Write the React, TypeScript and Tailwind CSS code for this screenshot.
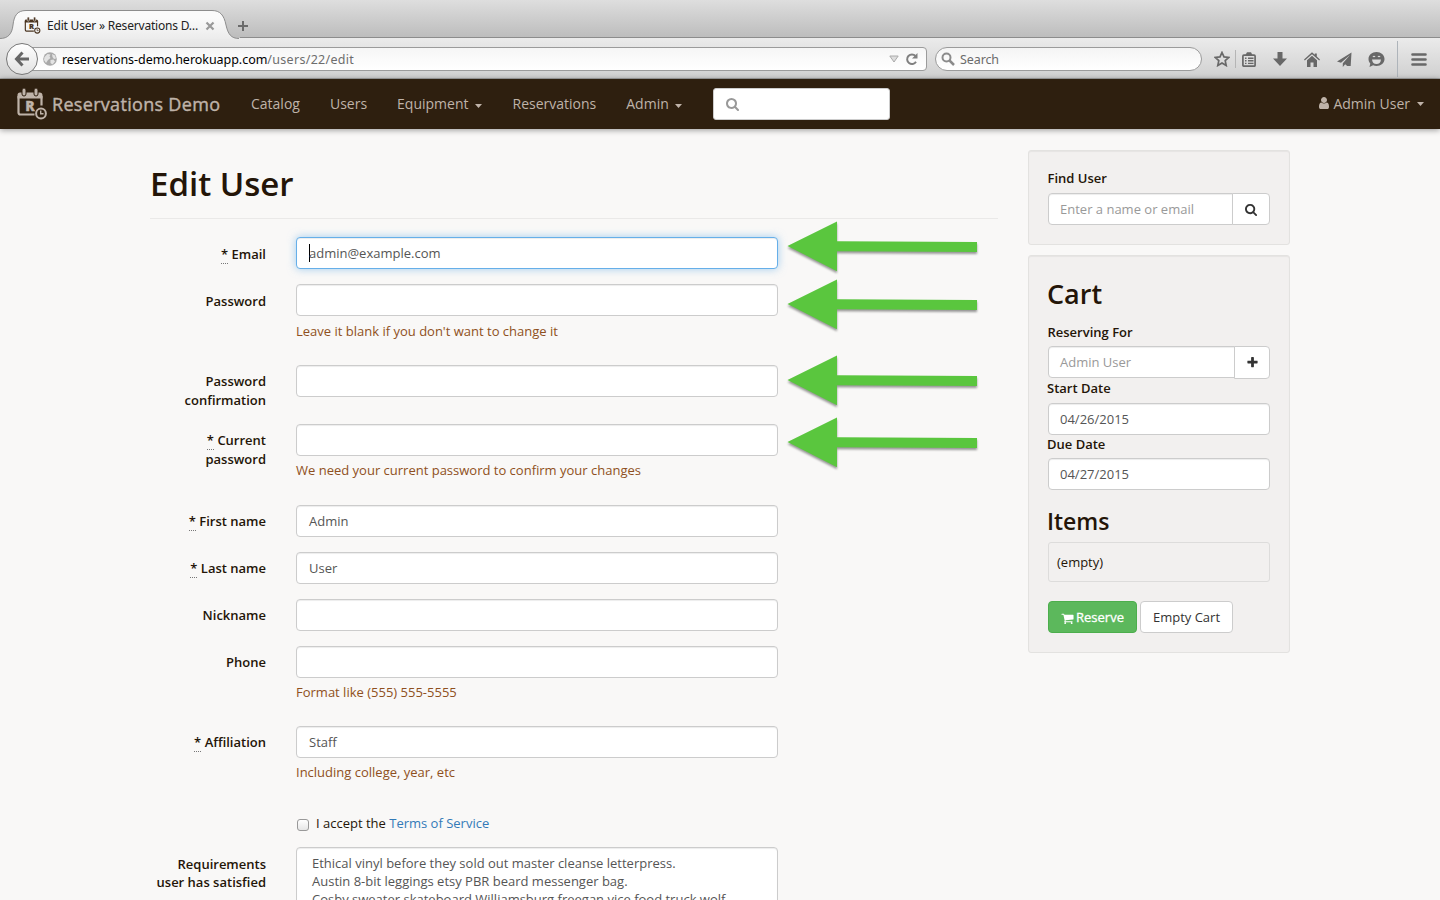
import React from "react";

const SEARCH =
  "M1152 832q0-185-131.5-316.5t-316.5-131.5-316.5 131.5-131.5 316.5 131.5 316.5 316.5 131.5 316.5-131.5 131.5-316.5zm512 832q0 52-38 90t-90 38q-54 0-90-38l-343-342q-179 124-399 124-143 0-273.5-55.5t-225-150-150-225-55.5-273.5 55.5-273.5 150-225 225-150 273.5-55.5 273.5 55.5 225 150 150 225 55.5 273.5q0 220-124 399l343 343q37 37 37 90z";
const CART =
  "M704 1536q0 52-38 90t-90 38-90-38-38-90 38-90 90-38 90 38 38 90zm896 0q0 52-38 90t-90 38-90-38-38-90 38-90 90-38 90 38 38 90zm128-1088v512q0 24-16.5 42.5t-40.5 21.5l-1044 122q13 60 13 70 0 16-24 64h920q26 0 45 19t19 45-19 45-45 19h-1024q-26 0-45-19t-19-45q0-11 8-31.5t16-36 21.5-40 15.5-29.5l-177-823h-204q-26 0-45-19t-19-45 19-45 45-19h256q16 0 28.5 6.5t19.5 15.5 13 24.5 8 26 5.5 29.5 4.5 26h1201q26 0 45 19t19 45z";
const USER =
  "M1536 1399q0 109-62.5 187t-150.5 78h-854q-88 0-150.5-78t-62.5-187q0-85 8.5-160.5t31.5-152 58.5-131 94-89 134.5-34.5q131 128 313 128t313-128q76 0 134.5 34.5t94 89 58.5 131 31.5 152 8.5 160.5zm-256-887q0 159-112.5 271.5t-271.5 112.5-271.5-112.5-112.5-271.5 112.5-271.5 271.5-112.5 271.5 112.5 112.5 271.5z";
const PLUS =
  "M1600 736v192q0 40-28 68t-68 28h-416v416q0 40-28 68t-68 28h-192q-40 0-68-28t-28-68v-416h-416q-40 0-68-28t-28-68v-192q0-40 28-68t68-28h416v-416q0-40 28-68t68-28h192q40 0 68 28t28 68v416h416q40 0 68 28t28 68z";

function Glyph({ d, className }: { d: string; className: string }) {
  return (
    <svg viewBox="0 0 1792 1792" fill="currentColor" className={className}>
      <path d={d} />
    </svg>
  );
}

function Logo({ className }: { className: string }) {
  return (
    <svg viewBox="0 0 30 32" className={className} fill="none" stroke="currentColor">
      <path d="M3 4.500h19.500q3 0 3 3V10.500H.5V7q0-2.500 2.500-2.500z" fill="currentColor" stroke="none" />
      <path d="M1.500 8v16.500q0 2 2 2h14M24.500 8v9.500" strokeWidth="2.200" />
      <rect x="5" y="0" width="4" height="8" rx="2" className="fill-current stroke-[#2e1f0f]" strokeWidth="1" />
      <rect x="17" y="0" width="4" height="8" rx="2" className="fill-current stroke-[#2e1f0f]" strokeWidth="1" />
      <text x="8.200" y="22.800" fontSize="14" fontWeight="800" fontFamily="Open Sans, sans-serif" fill="currentColor" stroke="currentColor" strokeWidth="0.300">
        R
      </text>
      <circle cx="24" cy="25.500" r="4.900" strokeWidth="2" />
      <path d="M23.700 22.500v3.200h2.800" strokeWidth="1.400" />
    </svg>
  );
}

function Caret() {
  return <span className="ml-1.5 inline-block h-0 w-[7px] align-middle"><svg viewBox="0 0 7 4" className="-mt-px h-1 w-[7px] fill-current"><path d="M0 0h7L3.500 4z" /></svg></span>;
}

function Browser() {
  return (
    <header className="h-[79px] shrink-0 font-['Noto_Sans','Open_Sans',sans-serif]">
      <div className="flex h-[38px] bg-linear-to-b from-[#dedede] to-[#bcbcbc]">
        <div className="relative h-[39px] w-[240px] shrink-0">
          <svg viewBox="0 0 240 39" className="absolute inset-0 h-[39px] w-[240px]">
            <defs>
              <linearGradient id="tab" x1="0" y1="0" x2="0" y2="1">
                <stop offset="0.250" stopColor="#fafafa" />
                <stop offset="1" stopColor="#ebebeb" />
              </linearGradient>
            </defs>
            <path d="M0 38.500C8 38.500 12 34 13 25C14 16 17 10.500 26 10.500H212C220 10.500 224 15 226 25C228 34 231 38.500 239 38.500V40H0z" fill="url(#tab)" />
            <path d="M0 38.500C8 38.500 12 34 13 25C14 16 17 10.500 26 10.500H212C220 10.500 224 15 226 25C228 34 231 38.500 239 38.500" fill="none" stroke="#8d8d8d" />
          </svg>
          <div className="relative flex h-[39px] items-center pt-3 pl-6">
            <Logo className="h-[17px] w-[17px] text-[#4a3420] [&_rect]:stroke-[#f5f5f5]" />
            <span className="ml-1.5 w-[153px] text-[12px] leading-4 tracking-[-0.200px] whitespace-nowrap text-[#222]">Edit User » Reservations D…</span>
            <svg viewBox="0 0 10 10" className="ml-[5px] size-2.5 stroke-[#999]" strokeWidth="2.200">
              <path d="M1.500 1.500l7 7M8.500 1.500l-7 7" />
            </svg>
          </div>
        </div>
        <div className="flex flex-1 items-center border-b border-[#8c8c8c] pt-3.5">
          <svg viewBox="0 0 12 12" className="-ml-[3px] size-3 stroke-[#6b6b6b]" strokeWidth="2">
            <path d="M6 1v10M1 6h10" />
          </svg>
        </div>
      </div>
      <div className="flex h-[41px] items-center border-b border-[#a5a5a5] bg-linear-to-b from-[#ebebeb] to-[#d0d0d0] pt-0.5 pl-1.5">
        <div className="relative z-10 flex size-8 shrink-0 items-center justify-center rounded-full border border-[#777] bg-linear-to-b from-white to-[#e2e2e2]">
          <svg viewBox="0 0 16 16" className="size-4 fill-none stroke-[#666]" strokeWidth="3">
            <path d="M8.500 1.500L2.500 8l6 6.500M2.500 8H15" />
          </svg>
        </div>
        <div className="-ml-2 flex h-6 w-[897px] items-center rounded-r border border-[#9b9b9b] bg-linear-to-b from-[#f6f6f6] to-white pl-3">
          <svg viewBox="0 0 14 14" className="size-3.5">
            <circle cx="7" cy="7" r="6.800" fill="#a9a9a9" />
            <path d="M1.500 5l3-3 3 .5-1 2 1 1.500-2.500 2-2 3L1 8zM9 2l3 1.500 1 3-2 .5-1.500-2zM7.500 8l3-.5 1.500 2-2.500 3-2-1.500z" fill="#e3e3e3" />
          </svg>
          <span className="ml-[5px] flex-1 pt-px text-[12.500px] leading-4 tracking-[0.300px] whitespace-nowrap text-[#6d6d6d]">
            <span className="tracking-[-0.040px] text-black">reservations-demo.herokuapp.com</span>/users/22/edit
          </span>
          <svg viewBox="0 0 10 8" className="h-2 w-2.5 fill-[#ddd] stroke-[#aaa]">
            <path d="M.8 1h8.400L5 7z" />
          </svg>
          <svg viewBox="0 0 14 14" className="mr-[7px] ml-1.5 size-3.5 fill-none stroke-[#808080]" strokeWidth="2">
            <path d="M11 9.800A4.800 4.800 0 1 1 10.500 4" />
            <path d="M12.500 1v5.500H7z" fill="#808080" stroke="none" />
          </svg>
        </div>
        <div className="ml-2 flex h-6 w-[267px] items-center rounded-full border border-[#9b9b9b] bg-linear-to-b from-[#f4f4f4] to-white pl-[5px] text-[12px] text-[#6b6b6b]">
          <svg viewBox="0 0 14 14" className="mr-[5px] size-3.5 fill-none stroke-[#8b8b8b]" strokeWidth="2">
            <circle cx="5.500" cy="5.500" r="4" />
            <path d="M8.500 8.500l4.500 4.500" strokeWidth="2.500" />
          </svg>
          <span className="pt-0.5 text-[12.500px] tracking-[-0.100px]">Search</span>
        </div>
        <div className="flex flex-1 items-center pl-3 text-[#686868]">
          <svg viewBox="0 0 16 16" className="size-4 fill-none stroke-current" strokeWidth="1.700">
            <path d="M8 1.500l2 4.400 4.800.5-3.600 3.200 1 4.900L8 12l-4.200 2.500 1-4.900L1.200 6.400 6 5.900z" />
          </svg>
          <span className="ml-[5px] h-[18px] w-px bg-[#b5b5b5]" />
          <svg viewBox="0 0 14 15" className="ml-1.5 h-[15px] w-3.5 fill-none stroke-current" strokeWidth="1.700">
            <rect x="0.900" y="3.200" width="12.200" height="11" rx="1" />
            <path d="M4.500 3l1-2h3l1 2z" fill="currentColor" />
            <path d="M3 6.200h1.500M6 6.200h5.500M3 8.800h1.500M6 8.800h5.500M3 11.400h1.500M6 11.400h5.500" strokeWidth="1.400" />
          </svg>
          <svg viewBox="0 0 14 14" className="ml-[17px] size-3.5 fill-current">
            <path d="M4.500 0h5v6.500H14L7 14 0 6.500h4.500z" />
          </svg>
          <svg viewBox="0 0 16 15" className="ml-[17px] h-[15px] w-4 fill-current">
            <path d="M8 .3l2.800 2.500V1.500h2v3.100L16 7.500l-.8 1L8 2.200.8 8.500 0 7.500z" />
            <path d="M8 3.800l5 4.400V15H9.500v-4.500h-3V15H3V8.200z" />
          </svg>
          <svg viewBox="0 0 15 15" className="ml-[17px] size-[15px] fill-current">
            <path d="M14.500.5L0 9.500l4 1.200L13 3 5.800 11.300V15l2.400-2.700 2 1.700h3.500z" />
          </svg>
          <svg viewBox="0 0 17 15" className="ml-4 h-[15px] w-[17px]">
            <path d="M8.500 0C13 0 16.500 3 16.500 7S13 14 8.500 14c-1.300 0-2.400-.2-3.400-.7L1.500 15l.8-3.500C1.100 10.300.5 8.800.5 7 .5 3 4 0 8.500 0z" fill="currentColor" />
            <path d="M4 7.500h9Q12.500 12 8.500 12T4 7.500z" fill="#ddd" />
            <path d="M5 5q1-1.500 2 0M10 5q1-1.500 2 0" fill="none" stroke="#ddd" strokeWidth="1.200" />
          </svg>
          <span className="ml-3 h-9 w-px bg-[#aeb4ba]" />
          <svg viewBox="0 0 16 13" className="ml-[13px] h-[13px] w-4 stroke-current" strokeWidth="2.600" strokeLinecap="round">
            <path d="M1.500 1.500h13M1.500 6.500h13M1.500 11.500h13" />
          </svg>
        </div>
      </div>
    </header>
  );
}

function Navbar() {
  return (
    <nav className="relative flex h-[50px] shrink-0 items-center bg-[#2e1f0f] pr-4 pl-[17px] text-[14px] text-[#bfb3a9] shadow-[0_1px_6px_rgba(0,0,0,0.4)]">
      <Logo className="h-8 w-[30px]" />
      <span className="ml-[5px] w-[199px] text-[18px] tracking-[0.310px] whitespace-nowrap [-webkit-text-stroke:0.400px_currentColor]">Reservations Demo</span>
      <div className="flex gap-[30px] pb-[2px] whitespace-nowrap">
        <span>Catalog</span>
        <span>Users</span>
        <span>Equipment<Caret /></span>
        <span className="ml-px">Reservations</span>
        <span>Admin<Caret /></span>
      </div>
      <div className="ml-[31px] flex h-8 w-[177px] items-center rounded-[3px] border border-[#ccc] bg-white pl-3 text-[#999]">
        <Glyph d={SEARCH} className="size-3.5" />
      </div>
      <div className="ml-auto flex items-center pb-[2px]">
        <Glyph d={USER} className="mr-0.5 size-3.5" />
        Admin User
        <svg viewBox="0 0 7 4" className="mt-0.5 ml-[7px] h-1 w-[7px] fill-current"><path d="M0 0h7L3.500 4z" /></svg>
      </div>
    </nav>
  );
}

const box = "rounded-[4px] border border-[#ccc] bg-white shadow-[inset_0_1px_1px_rgba(0,0,0,0.075)]";

type RowProps = {
  label: string;
  height: string;
  required?: boolean;
  value?: string;
  hint?: string;
  focused?: boolean;
  arrow?: string;
  loose?: boolean;
};

function Arrow({ offset }: { offset: string }) {
  return (
    <svg viewBox="0 0 192 54" className={`absolute left-[637px] h-[54px] w-[192px] drop-shadow-[0_2px_1px_rgba(0,0,0,0.4)] ${offset}`}>
      <path d="M.5 25L50 .5v19.800L190 21v10l-140-.8v20z" fill="#5ac63e" />
    </svg>
  );
}

function Row({ label, height, required, value, hint, focused, arrow, loose }: RowProps) {
  return (
    <div className={`relative flex ${height}`}>
      <div className={`mr-[30px] w-[116px] text-right leading-[19px] font-semibold ${loose ? "pt-2" : "pt-[7px]"}`}>
        {required && <><span className="border-b border-dotted border-[#777]">*</span>{" "}</>}
        {label}
      </div>
      <div className="w-[482px]">
        <div className={`flex h-8 items-center px-3 pt-0.5 text-[#555] ${focused ? "rounded-[4px] border border-[#66afe9] bg-white shadow-[inset_0_1px_1px_rgba(0,0,0,0.075),0_0_8px_rgba(102,175,233,0.6)]" : box}`}>
          {focused && <span className="-mt-0.5 -mr-px h-[18px] w-px bg-black" />}
          {value}
        </div>
        {hint && <p className={`leading-[19px] text-[#8f5021] ${loose ? "mt-1.5" : "mt-[5px]"}`}>{hint}</p>}
      </div>
      {arrow && <Arrow offset={arrow} />}
    </div>
  );
}

const well = "rounded-[3px] border border-[#e3e2e0] bg-[#f2f0ef] px-[19px] shadow-[inset_0_1px_1px_rgba(0,0,0,0.05)]";

function Sidebar() {
  return (
    <aside className="ml-[30px] w-[262px] pt-[21px]">
      <section className={`h-[95px] pt-[18px] ${well}`}>
        <div className="leading-[19px] font-semibold"><span className="-ml-[0.500px]">Find User</span></div>
        <div className="mt-[5px] flex h-8">
          <div className={`flex flex-1 items-center rounded-r-none px-[11px] pt-0.5 text-[#999] ${box}`}>Enter a name or email</div>
          <div className="-ml-px flex w-[38px] items-center justify-center rounded-r-[4px] border border-[#ccc] bg-white text-[#333]">
            <Glyph d={SEARCH} className="size-[13px]" />
          </div>
        </div>
      </section>
      <section className={`mt-2.5 h-[398px] pt-[18px] ${well}`}>
        <h2 className="-ml-px text-[27px] leading-10 font-semibold">Cart</h2>
        <div className="mt-[9px] leading-[19px] font-semibold"><span className="-ml-[0.500px]">Reserving For</span></div>
        <div className="mt-1 flex h-8">
          <div className={`flex flex-1 items-center px-[11px] pt-0.5 text-[#999] ${box}`}>Admin User</div>
          <div className="-ml-1 flex h-[33px] w-9 items-center justify-center rounded-r-[4px] border border-[#ccc] bg-white text-[#333]">
            <Glyph d={PLUS} className="size-[13px]" />
          </div>
        </div>
        <div className="mt-[1px] -ml-px leading-[19px] font-semibold">Start Date</div>
        <div className={`mt-[5px] flex h-8 items-center px-[11px] pt-0.5 text-[#555] ${box}`}>04/26/2015</div>
        <div className="-ml-px leading-[19px] font-semibold">Due Date</div>
        <div className={`mt-1 flex h-8 items-center px-[11px] pt-0.5 text-[#555] ${box}`}>04/27/2015</div>
        <h3 className="mt-4 -ml-px text-[23px] leading-[30px] font-semibold">Items</h3>
        <div className="mt-1.5 flex h-10 items-center rounded-[3px] border border-[#dddcdb] px-2 pt-0.5">(empty)</div>
        <div className="mt-[19px] flex gap-[3px]">
          <div className="flex h-8 w-[89px] items-center justify-center rounded-[4px] border border-[#4cae4c] bg-[#5cb85c] pt-0.5 text-white [-webkit-text-stroke:0.300px_currentColor]">
            <Glyph d={CART} className="mr-0.5 size-[13px]" />
            Reserve
          </div>
          <div className="flex h-8 w-[93px] items-center justify-center rounded-[4px] border border-[#ccc] bg-white pt-0.5 text-[#333]">Empty Cart</div>
        </div>
      </section>
    </aside>
  );
}

export default function App() {
  return (
    <div className="flex h-[900px] w-[1440px] flex-col overflow-hidden bg-[#f9f8f7] font-['Open_Sans',sans-serif] text-[13px] text-[#241508]">
      <Browser />
      <Navbar />
      <main className="flex min-h-0 flex-1 pl-[150px]">
        <div className="w-[848px]">
          <h1 className="h-[90px] border-b border-[#eae9e8] pt-[30px] text-[33px] leading-[50px] font-semibold">Edit User</h1>
          <form className="pt-[18px]">
            <Row label="Email" height="h-[47px]" required value="admin@example.com" focused loose arrow="-top-[16px]" />
            <Row label="Password" height="h-[81px]" hint="Leave it blank if you don't want to change it" loose arrow="-top-[5px]" />
            <Row label="Password confirmation" height="h-[59px]" arrow="-top-[10px]" />
            <Row label="Current password" height="h-[81px]" required hint="We need your current password to confirm your changes" arrow="-top-[7px]" />
            <Row label="First name" height="h-[47px]" required value="Admin" />
            <Row label="Last name" height="h-[47px]" required value="User" />
            <Row label="Nickname" height="h-[47px]" />
            <Row label="Phone" height="h-[80px]" hint="Format like (555) 555-5555" />
            <Row label="Affiliation" height="h-[88px]" required value="Staff" hint="Including college, year, etc" />
            <div className="flex h-[33px] items-start pl-[147px] leading-[19px]">
              <span className="mt-[5px] mr-[7px] size-3 rounded-[3px] border border-[#999] bg-linear-to-b from-white to-[#e6e6e6]" />
              <span>I accept the <span className="text-[#337ab7]">Terms of Service</span></span>
            </div>
            <div className="flex h-[53px] overflow-hidden">
              <div className="mr-[30px] w-[116px] pt-2 text-right leading-[18px] font-semibold">Requirements<br />user has satisfied</div>
              <div className={`h-20 w-[482px] px-[15px] pt-1.5 leading-[18px] whitespace-nowrap text-[#555] ${box}`}>
                Ethical vinyl before they sold out master cleanse letterpress.<br />
                Austin 8-bit leggings etsy PBR beard messenger bag.<br />
                Cosby sweater skateboard Williamsburg freegan vice food truck wolf
              </div>
            </div>
          </form>
        </div>
        <Sidebar />
      </main>
    </div>
  );
}
